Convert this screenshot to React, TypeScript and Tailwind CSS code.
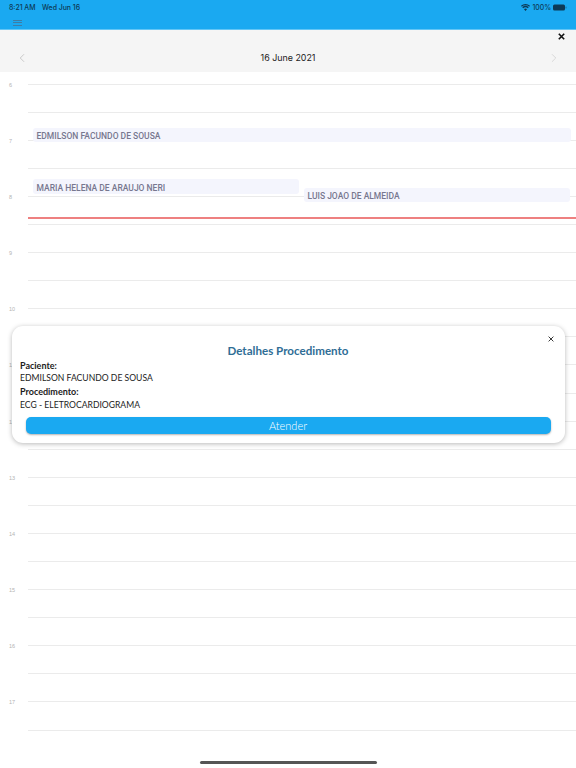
import React from "react";
import { ChevronLeft, ChevronRight } from "lucide-react";

const hours = [6, 7, 8, 9, 10, 11, 12, 13, 14, 15, 16, 17];

function HourRow({ h }: { h: number }) {
  return (
    <div className="h-[56.18px] relative">
      <div className="flex h-[28.09px] items-end">
        <div className="w-[28px] h-0 relative">
          <span className="absolute left-[9px] top-[-4px] text-[5.5px] leading-[8px] text-[#b4b4b4]">{h}</span>
        </div>
        <div className="flex-1 h-[1px] bg-[#ebebeb]" />
      </div>
      <div className="flex h-[28.09px] items-end">
        <div className="w-[28px]" />
        <div className="flex-1 h-[1px] bg-[#ebebeb]" />
      </div>
    </div>
  );
}

function Event({ name, cls }: { name: string; cls: string }) {
  return (
    <div className={"absolute bg-[#f4f5fd] rounded-[3px] text-[8.5px] font-medium text-[#77778f] pl-[3.5px] pt-[3px] flex items-center font-['Roboto',sans-serif] " + cls}>
      {name}
    </div>
  );
}

export default function App() {
  return (
    <div className="relative w-[576px] h-[768px] overflow-hidden bg-white font-['Liberation_Sans',sans-serif]">
      <div className="h-[30px] bg-[#1aa9f1] border-b border-[#63c6f6] relative">
        <div className="flex items-center justify-between h-[15px] pt-[1px] pl-[9px] pr-[9px] text-[6.9px] font-medium text-[#0d3a56] font-['Inter',sans-serif]">
          <span>
            8:21 AM<span className="ml-[6.5px]">Wed Jun 16</span>
          </span>
          <span className="flex items-center gap-[2px]">
            <svg width="9" height="7" viewBox="0 0 18 14" fill="#0d3a56">
              <path d="M9 14 L6 10.5 A4.5 4.5 0 0 1 12 10.5 Z M4.3 8.6 L2.6 6.6 A9.5 9.5 0 0 1 15.4 6.6 L13.7 8.6 A7 7 0 0 0 4.3 8.6 Z M1.6 5.3 L0 3.5 A13.5 13.5 0 0 1 18 3.5 L16.4 5.3 A11 11 0 0 0 1.6 5.3 Z" />
            </svg>
            <span>100%</span>
            <svg width="14" height="7" viewBox="0 0 28 14">
              <rect x="0" y="1" width="24" height="12" rx="3" fill="#0d3a56" />
              <rect x="25" y="5" width="2" height="4" rx="1" fill="#0d3a56" opacity="0.5" />
            </svg>
          </span>
        </div>
        <div className="absolute left-[13px] top-[20px] w-[9px] flex flex-col gap-[1.3px]">
          <div className="h-[1px] bg-[#3d7da6]" />
          <div className="h-[1px] bg-[#3d7da6]" />
          <div className="h-[1px] bg-[#3d7da6]" />
        </div>
      </div>

      <div className="h-[42px] bg-[#f5f5f5] relative">
        <svg className="absolute left-[557.5px] top-[3px]" width="7" height="7" viewBox="0 0 7 7">
          <path d="M0.8 0.8 L6.2 6.2 M6.2 0.8 L0.8 6.2" stroke="#111" strokeWidth="1.6" />
        </svg>
        <div className="flex items-center justify-between pl-[15px] pr-[15px] h-[27px] absolute left-0 right-0 top-[14px]">
          <ChevronLeft size={14} strokeWidth={1} className="text-[#a8a8a8]" />
          <span className="text-[8.9px] text-[#222] font-['Inter',sans-serif]">16 June 2021</span>
          <ChevronRight size={14} strokeWidth={1} className="text-[#c4c4c4]" />
        </div>
      </div>

      <div className="mt-[-15.5px]">
        {hours.map((h) => (
          <HourRow key={h} h={h} />
        ))}
      </div>

      <Event name="EDMILSON FACUNDO DE SOUSA" cls="left-[33px] top-[128px] w-[538px] h-[14px]" />
      <Event name="MARIA HELENA DE ARAUJO NERI" cls="left-[33px] top-[179px] w-[266px] h-[15px]" />
      <Event name="LUIS JOAO DE ALMEIDA" cls="left-[304px] top-[188px] w-[266px] h-[14px]" />

      <div className="absolute left-[28px] right-0 top-[216.5px] h-[2px] bg-[#ee8080]" />

      <div className="absolute left-[11.5px] top-[325.5px] w-[553px] h-[117px] bg-white rounded-[11px] shadow-[0_1px_5px_rgba(0,0,0,0.28)] font-['Lato',sans-serif]">
        <svg className="absolute left-[536.5px] top-[10px]" width="6" height="6" viewBox="0 0 6 6">
          <path d="M0.6 0.6 L5.4 5.4 M5.4 0.6 L0.6 5.4" stroke="#222" strokeWidth="0.9" />
        </svg>
        <div className="text-center text-[#2f6d95] text-[11.6px] font-bold pt-[18px] leading-[14px]">Detalhes Procedimento</div>
        <div className="px-[8.5px] pt-[1.5px] text-[8.6px] leading-[13.2px] text-[#1c1c1c]">
          <div className="font-bold text-[9px]">Paciente:</div>
          <div>EDMILSON FACUNDO DE SOUSA</div>
          <div className="font-bold text-[9px]">Procedimento:</div>
          <div>ECG - ELETROCARDIOGRAMA</div>
        </div>
        <div className="mx-[14px] mt-[5.5px] h-[17px] bg-[#1aa9f1] rounded-[5px] shadow-[0_1px_2px_rgba(0,0,0,0.3)] text-white text-[11px] font-light flex items-center justify-center">
          Atender
        </div>
      </div>

      <div className="absolute left-[199.5px] top-[760.5px] w-[177px] h-[3px] rounded-full bg-[#555]" />
    </div>
  );
}
